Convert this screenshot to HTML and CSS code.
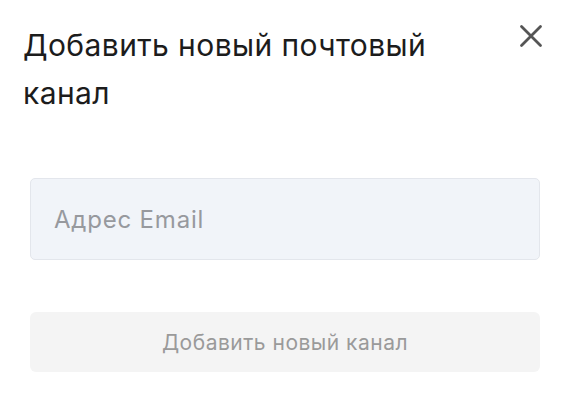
FILE: index.html
```html
<!DOCTYPE html>
<html lang="ru">
<head>
    <meta charset="UTF-8">
    <title>Добавить новый почтовый канал</title>
    <link rel="stylesheet" href="styles.css">
</head>
<body>
    <div class="modal">
        <div class="modal-header">
            <h1 class="modal-title">Добавить новый почтовый канал</h1>
            <button class="close-btn" aria-label="Закрыть">
                <svg width="24" height="24" viewBox="0 0 24 24">
                    <path d="M2.5 2.5L21.5 21.5M21.5 2.5L2.5 21.5" stroke="#555" stroke-width="2.8" stroke-linecap="round" fill="none"/>
                </svg>
            </button>
        </div>
        <div class="modal-body">
            <input class="email-input" type="email" placeholder="Адрес Email">
            <button class="submit-btn" disabled>Добавить новый канал</button>
        </div>
    </div>
</body>
</html>
```
FILE: styles.css
```css
body {
    margin: 0;
    background: #fff;
    font-family: Inter, 'Noto Sans', sans-serif;
}

.modal {
    padding: 21px 36px 32px 23px;
}

.modal-header {
    display: flex;
    justify-content: space-between;
    align-items: flex-start;
}

.modal-title {
    margin: 0;
    width: 450px;
    font-size: 30px;
    font-weight: 400;
    letter-spacing: 0.4px;
    line-height: 48px;
    color: #1c1c1c;
}

.close-btn {
    background: none;
    border: none;
    padding: 0;
    margin-top: 3px;
    margin-right: -3px;
    cursor: pointer;
}

.modal-body {
    display: flex;
    flex-direction: column;
    margin-left: 7px;
}

.email-input {
    margin-top: 61px;
    height: 82px;
    box-sizing: border-box;
    border: 1px solid #e3e6ec;
    border-radius: 5px;
    background: #f1f4f9;
    padding: 0 23px;
    font-family: Inter, sans-serif;
    font-size: 24px;
    color: #333;
    outline: none;
}

.email-input::placeholder {
    color: #97999e;
    letter-spacing: 0.8px;
}

.submit-btn {
    margin-top: 52px;
    height: 60px;
    border: none;
    border-radius: 6px;
    background: #f4f4f4;
    color: #9a9a9a;
    font-family: Inter, sans-serif;
    font-size: 21px;
    letter-spacing: 0.5px;
}
```
